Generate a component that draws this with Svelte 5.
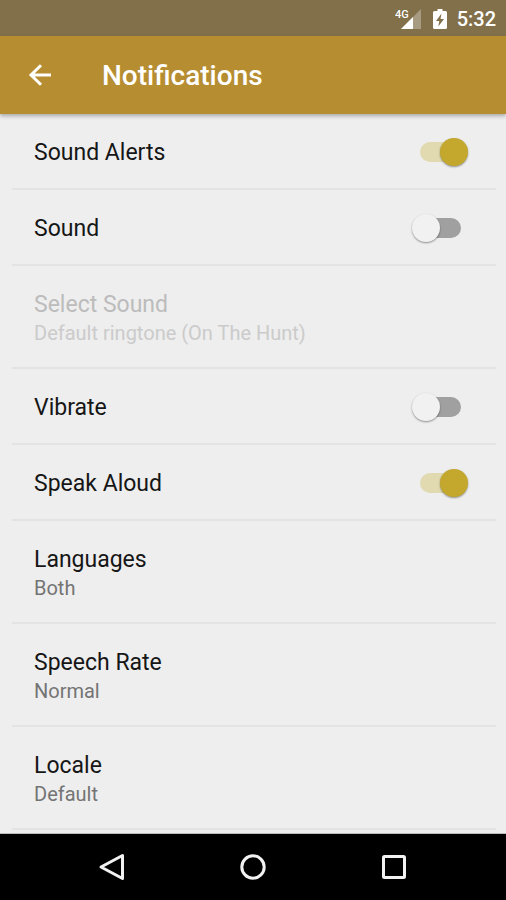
<script>
  let settings = $state([
    { id: 'sound-alerts', title: 'Sound Alerts', type: 'switch', on: true },
    { id: 'sound', title: 'Sound', type: 'switch', on: false },
    { id: 'select-sound', title: 'Select Sound', type: 'choice', value: 'Default ringtone (On The Hunt)', disabled: true },
    { id: 'vibrate', title: 'Vibrate', type: 'switch', on: false },
    { id: 'speak-aloud', title: 'Speak Aloud', type: 'switch', on: true },
    { id: 'languages', title: 'Languages', type: 'choice', value: 'Both' },
    { id: 'speech-rate', title: 'Speech Rate', type: 'choice', value: 'Normal' },
    { id: 'locale', title: 'Locale', type: 'choice', value: 'Default' }
  ]);
</script>

<div class="screen">
  <div class="status">
    <svg class="signal" width="26" height="22" viewBox="0 0 26 22" aria-hidden="true">
      <path d="M26 1V21H6Z" fill="#fff" fill-opacity=".3" />
      <path d="M18 9V21H6Z" fill="#fff" />
      <text x="0" y="10" font-size="11" font-weight="500" fill="#fff">4G</text>
    </svg>
    <svg class="battery" width="14" height="22" viewBox="0 0 14 22" aria-hidden="true">
      <path d="M4.500 1H9.500V3H12.500Q14 3 14 4.500V19.500Q14 21 12.500 21H1.500Q0 21 0 19.500V4.500Q0 3 1.500 3H4.500Z" fill="#fff" />
      <path d="M8.500 5.500L3 13H6.300L5.300 18.500L11 11H7.500Z" fill="#82704b" />
    </svg>
    <time>5:32</time>
  </div>

  <header>
    <button class="back" aria-label="Navigate up">
      <svg width="24" height="24" viewBox="0 0 24 24" fill="none" stroke="#fff" stroke-width="3">
        <path d="M23 12H3M13 2.200L3 12L13 21.800" />
      </svg>
    </button>
    <h1>Notifications</h1>
  </header>

  <main>
    {#each settings as item (item.id)}
      {#if item.type === 'switch'}
        <label class="row toggle" for={item.id}>
          <span class="title">{item.title}</span>
          <input id={item.id} type="checkbox" role="switch" bind:checked={item.on} />
        </label>
      {:else}
        <button class="row choice" disabled={item.disabled}>
          <span class="title">{item.title}</span>
          <span class="summary">{item.value}</span>
        </button>
      {/if}
    {/each}
  </main>

  <nav aria-label="System">
    <button aria-label="Back">
      <svg width="28" height="28" viewBox="0 0 28 28"><path d="M24.500 2.500V25.500L3 14Z" /></svg>
    </button>
    <button aria-label="Home">
      <svg width="28" height="28" viewBox="0 0 28 28"><circle cx="14" cy="14" r="11.200" /></svg>
    </button>
    <button aria-label="Overview">
      <svg width="28" height="28" viewBox="0 0 28 28"><rect x="3.500" y="3.500" width="21" height="21" rx="1" /></svg>
    </button>
  </nav>
</div>

<style>
  :global(body) {
    margin: 0;
    background: #eee;
  }

  .screen {
    display: flex;
    flex-direction: column;
    min-height: 100vh;
    background: #eee;
    font-family: Roboto, "Liberation Sans", sans-serif;
  }

  button {
    margin: 0;
    padding: 0;
    border: 0;
    background: none;
    font: inherit;
    color: inherit;
  }

  svg {
    display: block;
  }

  .status {
    display: flex;
    align-items: center;
    justify-content: flex-end;
    box-sizing: border-box;
    height: 36px;
    padding: 1px 10px 0 0;
    background: #82704b;
    color: #fff;
  }

  .signal {
    margin-right: 12px;
  }

  .battery {
    margin-right: 10px;
  }

  time {
    font-size: 20px;
    font-weight: 500;
    line-height: 36px;
  }

  header {
    display: flex;
    align-items: center;
    height: 78px;
    padding-left: 28px;
    background: #b68d30;
    color: #fff;
    box-shadow: 0 2px 4px rgba(0, 0, 0, 0.3);
    z-index: 1;
  }

  .back {
    margin-right: 50px;
  }

  h1 {
    margin: 0;
    padding-top: 2px;
    font-size: 28px;
    font-weight: 500;
    line-height: 36px;
  }

  main {
    flex: 1;
    padding: 0 10px 0 12px;
    border-bottom: 1px solid #bbb;
  }

  .row {
    display: flex;
    box-sizing: border-box;
    width: 100%;
    border-bottom: 2px solid #e3e3e3;
    color: #161616;
  }

  .toggle {
    align-items: center;
    justify-content: space-between;
    height: 76px;
    padding: 2px 27px 0 22px;
  }

  .choice {
    flex-direction: column;
    align-items: flex-start;
    padding: 25px 22px 20px;
    text-align: left;
  }

  .title {
    font-size: 23px;
    line-height: 28px;
  }

  .toggle .title {
    padding-top: 2px;
  }

  .summary {
    font-size: 20px;
    line-height: 28px;
    color: #747474;
  }

  .choice:disabled .title {
    color: #bcbcbc;
  }

  .choice:disabled .summary {
    color: #cbcbcb;
  }

  input {
    appearance: none;
    position: relative;
    width: 41px;
    height: 20px;
    margin: 0 8px;
    border-radius: 10px;
    background: #a0a0a0;
  }

  input::before {
    content: "";
    position: absolute;
    top: -4px;
    left: -8px;
    width: 28px;
    height: 28px;
    border-radius: 50%;
    background: #f1f1f1;
    box-shadow: 0 1px 2px rgba(0, 0, 0, 0.4);
  }

  input:checked {
    background: #e1dab0;
  }

  input:checked::before {
    left: 20px;
    background: #c3a82d;
  }

  nav {
    display: flex;
    align-items: center;
    justify-content: center;
    gap: 113px;
    height: 66px;
    background: #000;
  }

  nav svg {
    fill: none;
    stroke: #f2f2f2;
    stroke-width: 3;
    stroke-linejoin: round;
  }
</style>
